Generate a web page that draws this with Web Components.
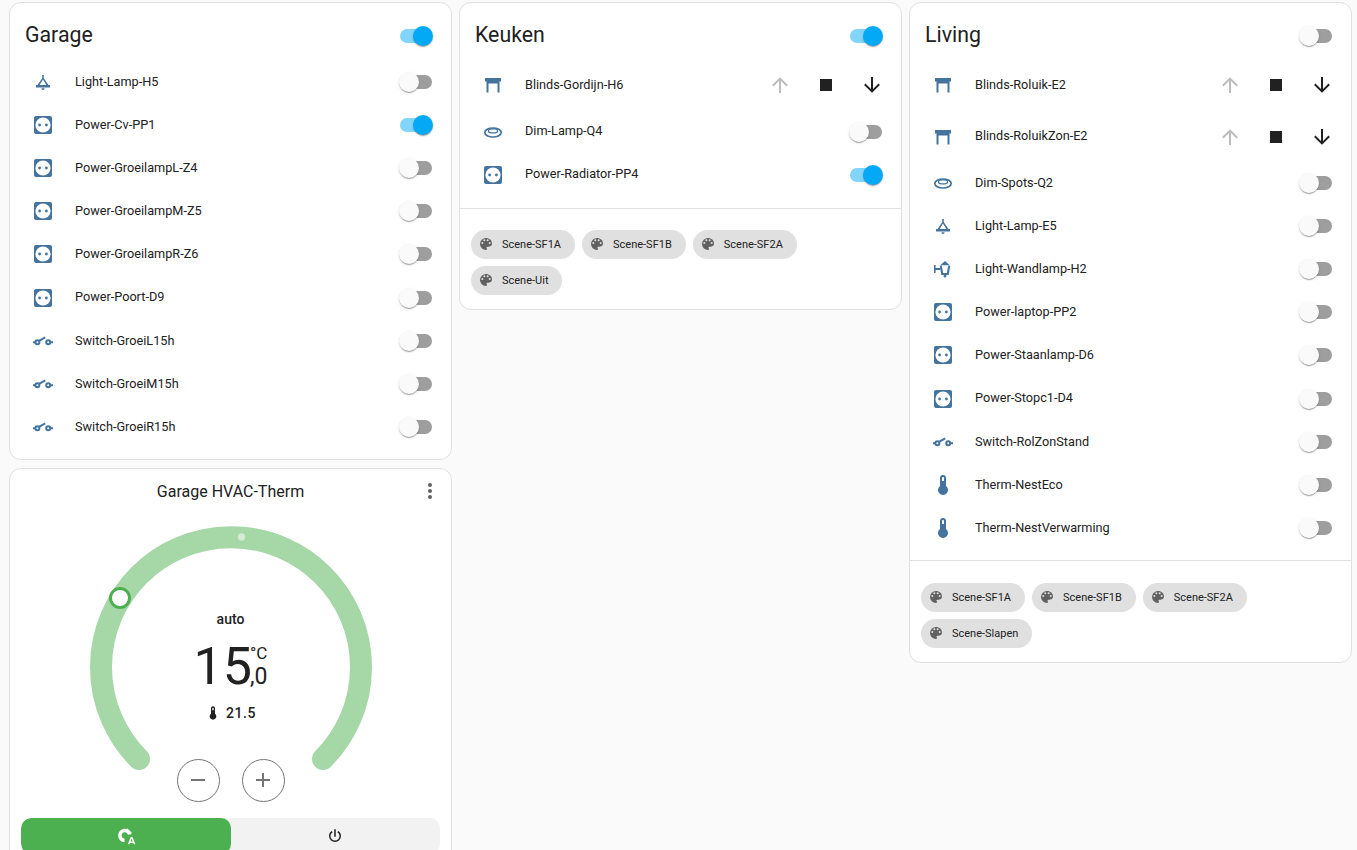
<!DOCTYPE html>
<html>
<head>
<meta charset="utf-8">
<title>Dashboard</title>
<style>
    html { overflow: hidden; }
    body {
        margin: 0;
        padding: 2px 5px 0 9px;
        background: #fafafa;
        color: #212121;
        font-family: Roboto, "Liberation Sans", sans-serif;
    }
    .columns {
        display: grid;
        grid-template-columns: repeat(3, 443px);
        gap: 7px;
        align-items: start;
    }
    .stack {
        display: flex;
        flex-direction: column;
        gap: 7.5px;
    }
</style>
</head>
<body>
<div class="columns">
    <div class="stack">
        <entities-card name="Garage" on="on">
            <entity-row icon="ceiling" name="Light-Lamp-H5"></entity-row>
            <entity-row icon="socket" name="Power-Cv-PP1" on="on"></entity-row>
            <entity-row icon="socket" name="Power-GroeilampL-Z4"></entity-row>
            <entity-row icon="socket" name="Power-GroeilampM-Z5"></entity-row>
            <entity-row icon="socket" name="Power-GroeilampR-Z6"></entity-row>
            <entity-row icon="socket" name="Power-Poort-D9"></entity-row>
            <entity-row icon="switch" name="Switch-GroeiL15h"></entity-row>
            <entity-row icon="switch" name="Switch-GroeiM15h"></entity-row>
            <entity-row icon="switch" name="Switch-GroeiR15h"></entity-row>
        </entities-card>
        <climate-card name="Garage HVAC-Therm"></climate-card>
    </div>
    <entities-card name="Keuken" on="on" style="--rows-pad: 11.5px">
        <cover-row name="Blinds-Gordijn-H6"></cover-row>
        <entity-row icon="dim" name="Dim-Lamp-Q4"></entity-row>
        <entity-row icon="socket" name="Power-Radiator-PP4" on="on"></entity-row>
        <scene-chip slot="chips" name="Scene-SF1A"></scene-chip>
        <scene-chip slot="chips" name="Scene-SF1B"></scene-chip>
        <scene-chip slot="chips" name="Scene-SF2A"></scene-chip>
        <scene-chip slot="chips" name="Scene-Uit"></scene-chip>
    </entities-card>
    <entities-card name="Living">
        <cover-row name="Blinds-Roluik-E2"></cover-row>
        <cover-row name="Blinds-RoluikZon-E2" style="margin-top: 2px"></cover-row>
        <entity-row icon="dim" name="Dim-Spots-Q2"></entity-row>
        <entity-row icon="ceiling" name="Light-Lamp-E5"></entity-row>
        <entity-row icon="wall" name="Light-Wandlamp-H2"></entity-row>
        <entity-row icon="socket" name="Power-laptop-PP2"></entity-row>
        <entity-row icon="socket" name="Power-Staanlamp-D6"></entity-row>
        <entity-row icon="socket" name="Power-Stopc1-D4"></entity-row>
        <entity-row icon="switch" name="Switch-RolZonStand"></entity-row>
        <entity-row icon="therm" name="Therm-NestEco"></entity-row>
        <entity-row icon="therm" name="Therm-NestVerwarming"></entity-row>
        <scene-chip slot="chips" name="Scene-SF1A"></scene-chip>
        <scene-chip slot="chips" name="Scene-SF1B"></scene-chip>
        <scene-chip slot="chips" name="Scene-SF2A"></scene-chip>
        <scene-chip slot="chips" name="Scene-Slapen"></scene-chip>
    </entities-card>
</div>

<script>
const ICONS = {
    ceiling: `<path fill-rule="evenodd" d="M11.200 5h1.600v3.200L17.500 15H19v2.600H5V15h1.500l4.700-6.800z M12 9.600L8.600 15h6.800z"/><path d="M10.400 18.300h3.200a1.600 1.600 0 0 1-3.200 0z"/>`,
    socket: `<rect x="3" y="3" width="18" height="18" rx="2"/><circle cx="12" cy="12" r="7.6" fill="#fff"/><circle cx="8.600" cy="12" r="1.400"/><circle cx="15.400" cy="12" r="1.400"/>`,
    switch: `<g fill="none" stroke="currentColor" stroke-width="2"><path d="M2 13.200h2.400"/><circle cx="6.400" cy="13.200" r="2"/><path d="M8 11.900l6.200-3.600"/><circle cx="17.200" cy="13.200" r="2"/><path d="M19.200 13.200H22"/></g>`,
    blinds: `<path d="M4 5h16v3.500h-1.500v11h-2v-9h-9v9h-2v-11H4z"/>`,
    dim: `<g fill="none" stroke="currentColor"><ellipse cx="12" cy="12.500" rx="8.200" ry="4.500" stroke-width="1.700"/><ellipse cx="12" cy="10.900" rx="4.600" ry="2" stroke-width="1.200"/></g>`,
    wall: `<path d="M3 8h1.600v8H3z M4.600 11.100H9.500v1.800H4.600z"/><path d="M14 4L18.800 8.200H9.200z"/><path d="M9.800 8.600l1.400 8.400h5.600l1.400-8.400" fill="none" stroke="currentColor" stroke-width="2.100"/><circle cx="14" cy="19" r="1.500"/>`,
    therm: `<path d="M15 13V5A3 3 0 0 0 9 5V13A5 5 0 1 0 15 13M12 4A1 1 0 0 1 13 5V8H11V5A1 1 0 0 1 12 4Z"/>`,
    palette: `<path d="M17.5,12A1.5,1.5 0 0,1 16,10.5A1.5,1.5 0 0,1 17.5,9A1.5,1.5 0 0,1 19,10.5A1.5,1.5 0 0,1 17.5,12M14.5,8A1.5,1.5 0 0,1 13,6.5A1.5,1.5 0 0,1 14.5,5A1.5,1.5 0 0,1 16,6.5A1.5,1.5 0 0,1 14.5,8M9.5,8A1.5,1.5 0 0,1 8,6.5A1.5,1.5 0 0,1 9.5,5A1.5,1.5 0 0,1 11,6.5A1.5,1.5 0 0,1 9.5,8M6.5,12A1.5,1.5 0 0,1 5,10.5A1.5,1.5 0 0,1 6.5,9A1.5,1.5 0 0,1 8,10.5A1.5,1.5 0 0,1 6.5,12M12,3A9,9 0 0,0 3,12A9,9 0 0,0 12,21A1.5,1.5 0 0,0 13.5,19.5C13.5,19.11 13.35,18.76 13.11,18.5C12.88,18.23 12.73,17.88 12.73,17.5A1.5,1.5 0 0,1 14.23,16H16A5,5 0 0,0 21,11C21,6.58 16.97,3 12,3Z"/>`,
    up: `<path d="M13,20H11V8L5.5,13.5L4.08,12.08L12,4.16L19.92,12.08L18.5,13.5L13,8V20Z"/>`,
    down: `<path d="M11,4H13V16L18.5,10.5L19.92,11.92L12,19.84L4.08,11.92L5.5,10.5L11,16V4Z"/>`,
    stop: `<path d="M18,18H6V6H18V18Z"/>`,
    dots: `<path d="M12,16A2,2 0 0,1 14,18A2,2 0 0,1 12,20A2,2 0 0,1 10,18A2,2 0 0,1 12,16M12,10A2,2 0 0,1 14,12A2,2 0 0,1 12,14A2,2 0 0,1 10,12A2,2 0 0,1 12,10M12,4A2,2 0 0,1 14,6A2,2 0 0,1 12,8A2,2 0 0,1 10,6A2,2 0 0,1 12,4Z"/>`,
    minus: `<path d="M19,13H5V11H19V13Z"/>`,
    plus: `<path d="M19,13H13V19H11V13H5V11H11V5H13V11H19V13Z"/>`,
    power: `<path d="M16.56,5.44L15.11,6.89C16.84,7.94 18,9.83 18,12A6,6 0 0,1 12,18A6,6 0 0,1 6,12C6,9.83 7.16,7.94 8.88,6.88L7.44,5.44C5.36,6.88 4,9.28 4,12A8,8 0 0,0 12,20A8,8 0 0,0 20,12C20,9.28 18.64,6.88 16.56,5.44M13,3H11V13H13"/>`,
    auto: `<path d="M15.800 10.500A5 5 0 1 0 10.500 16.500" fill="none" stroke="currentColor" stroke-width="3.600"/><path d="M13 4.200L18 9l-4.500 .5z"/><path d="M14.600 20.300l2.600-6.600h.8l2.600 6.600M15.600 18.300h4" fill="none" stroke="currentColor" stroke-width="1.500"/>`
};

class MdiIcon extends HTMLElement {
    constructor() {
        super();
        this.attachShadow({ mode: 'open' });
    }

    connectedCallback() {
        const size = this.getAttribute('size') || '24';
        this.shadowRoot.innerHTML = `
            <style>
                :host { display: inline-flex; flex: none; width: ${size}px; height: ${size}px; }
                svg { display: block; width: 100%; height: 100%; fill: currentColor; }
            </style>
            <svg viewBox="0 0 24 24">${ICONS[this.getAttribute('name')] || ''}</svg>
        `;
    }
}

class HaToggle extends HTMLElement {
    constructor() {
        super();
        this.attachShadow({ mode: 'open' });
    }

    connectedCallback() {
        const on = this.getAttribute('on') === 'on';
        this.shadowRoot.innerHTML = `
            <style>
                :host { display: block; flex: none; width: 32px; height: 20px; position: relative; }
                .track {
                    position: absolute;
                    left: 0;
                    top: 3px;
                    width: 32px;
                    height: 14px;
                    border-radius: 7px;
                    background: ${on ? '#81d4fa' : '#9e9e9e'};
                }
                .thumb {
                    position: absolute;
                    left: ${on ? '13px' : '-1px'};
                    top: 0;
                    width: 20px;
                    height: 20px;
                    border-radius: 50%;
                    background: ${on ? '#03a9f4' : '#fafafa'};
                    box-shadow: 0 2px 1px -1px rgba(0,0,0,.2), 0 1px 1px rgba(0,0,0,.14), 0 1px 3px rgba(0,0,0,.12);
                }
            </style>
            <div class="track"></div>
            <div class="thumb"></div>
        `;
    }
}

class EntitiesCard extends HTMLElement {
    constructor() {
        super();
        this.attachShadow({ mode: 'open' });
    }

    connectedCallback() {
        const hasChips = this.querySelector('[slot="chips"]') !== null;
        this.shadowRoot.innerHTML = `
            <style>
                :host {
                    display: block;
                    background: #fff;
                    border: 1px solid #e0e0e0;
                    border-radius: 12px;
                    box-sizing: border-box;
                    overflow: hidden;
                }
                .header {
                    display: flex;
                    align-items: center;
                    justify-content: space-between;
                    height: 57.5px;
                    padding: 8.5px 19px 0 15px;
                    box-sizing: border-box;
                    font-size: 21.3px;
                    line-height: 30px;
                }
                .header span { margin-bottom: 2px; }
                .rows { padding-bottom: var(--rows-pad, 11px); }
                .chips {
                    display: flex;
                    flex-wrap: wrap;
                    gap: 7px;
                    padding: 21.1px 11px 14px;
                    border-top: 1px solid #e0e0e0;
                }
            </style>
            <div class="header">
                <span>${this.getAttribute('name')}</span>
                <ha-toggle on="${this.getAttribute('on') || ''}"></ha-toggle>
            </div>
            <div class="rows"><slot></slot></div>
            ${hasChips ? '<div class="chips"><slot name="chips"></slot></div>' : ''}
        `;
    }
}

class EntityRow extends HTMLElement {
    constructor() {
        super();
        this.attachShadow({ mode: 'open' });
    }

    connectedCallback() {
        this.shadowRoot.innerHTML = `
            <style>
                :host {
                    display: flex;
                    align-items: center;
                    height: 43.12px;
                    padding: 0 19px 0 21px;
                    font-size: 12.7px;
                }
                mdi-icon { color: #44739e; margin-right: 20px; }
                .name { flex: 1; padding-bottom: 1.4px; }
            </style>
            <mdi-icon name="${this.getAttribute('icon')}"></mdi-icon>
            <span class="name">${this.getAttribute('name')}</span>
            <ha-toggle on="${this.getAttribute('on') || ''}"></ha-toggle>
        `;
    }
}

class CoverRow extends HTMLElement {
    constructor() {
        super();
        this.attachShadow({ mode: 'open' });
    }

    connectedCallback() {
        this.shadowRoot.innerHTML = `
            <style>
                :host {
                    display: flex;
                    align-items: center;
                    height: 49.5px;
                    padding: 0 6px 0.5px 21px;
                    box-sizing: border-box;
                    font-size: 12.7px;
                }
                .icon { color: #44739e; margin-right: 20px; }
                .name { flex: 1; padding-bottom: 2px; }
                .btn { width: 46px; display: flex; justify-content: center; color: #212121; }
                .off { color: #bdbdbd; }
            </style>
            <mdi-icon class="icon" name="blinds"></mdi-icon>
            <span class="name">${this.getAttribute('name')}</span>
            <div class="btn off"><mdi-icon name="up"></mdi-icon></div>
            <div class="btn"><mdi-icon name="stop"></mdi-icon></div>
            <div class="btn"><mdi-icon name="down"></mdi-icon></div>
        `;
    }
}

class SceneChip extends HTMLElement {
    constructor() {
        super();
        this.attachShadow({ mode: 'open' });
    }

    connectedCallback() {
        this.shadowRoot.innerHTML = `
            <style>
                :host {
                    display: inline-flex;
                    align-items: center;
                    height: 29px;
                    padding: 0 14px 0 7px;
                    border-radius: 15px;
                    background: #e0e0e0;
                    font-size: 11px;
                    color: #212121;
                }
                mdi-icon { color: #616161; margin-right: 8px; }
            </style>
            <mdi-icon name="palette" size="16"></mdi-icon>
            <span>${this.getAttribute('name')}</span>
        `;
    }
}

class ClimateCard extends HTMLElement {
    constructor() {
        super();
        this.attachShadow({ mode: 'open' });
    }

    connectedCallback() {
        // 270 graden boog, straal 130 rond (150,152)
        this.shadowRoot.innerHTML = `
            <style>
                :host {
                    display: block;
                    background: #fff;
                    border: 1px solid #e0e0e0;
                    border-radius: 12px;
                    box-sizing: border-box;
                    height: 400px;
                }
                .title {
                    display: grid;
                    grid-template-columns: 1fr auto 1fr;
                    align-items: center;
                    height: 46px;
                    padding-bottom: 1px;
                    box-sizing: border-box;
                    font-size: 16px;
                }
                .title mdi-icon { grid-column: 3; justify-self: end; margin-right: 9px; color: #616161; }
                .title span { grid-column: 2; }
                .dial { display: grid; justify-items: center; height: 244px; }
                .dial > * { grid-area: 1 / 1; }
                svg { display: block; width: 300px; height: 244px; overflow: visible; }
                .info {
                    display: flex;
                    flex-direction: column;
                    align-items: center;
                    padding-top: 94px;
                }
                .mode { font-size: 14px; font-weight: 500; line-height: 20px; }
                .value { display: flex; margin: 12px 0 10px; height: 52px; }
                .whole { font-size: 52px; line-height: 52px; font-weight: 400; }
                .side { display: flex; flex-direction: column; justify-content: flex-end; margin-left: -2px; padding-bottom: 3px; }
                .unit { font-size: 17px; line-height: 16px; margin-bottom: 3px; }
                .dec { font-size: 23px; line-height: 26px; }
                .current {
                    display: flex;
                    align-items: center;
                    gap: 5px;
                    font-size: 14px;
                    font-weight: 500;
                    letter-spacing: .5px;
                    line-height: 20px;
                }
                .buttons { display: flex; justify-content: center; gap: 22px; }
                .round {
                    width: 43px;
                    height: 43px;
                    box-sizing: border-box;
                    border: 1px solid #757575;
                    border-radius: 50%;
                    display: flex;
                    align-items: center;
                    justify-content: center;
                    color: #757575;
                }
                .modes {
                    display: flex;
                    margin: 16px 11px 0;
                    height: 36px;
                    border-radius: 10px;
                    background: #f2f2f2;
                    overflow: hidden;
                }
                .modes div { flex: 1; display: flex; align-items: center; justify-content: center; color: #212121; }
                .modes .active { background: #4caf50; color: #fff; border-radius: 10px; }
            </style>
            <div class="title">
                <span>${this.getAttribute('name')}</span>
                <mdi-icon name="dots"></mdi-icon>
            </div>
            <div class="dial">
                <svg viewBox="0 0 300 244">
                    <path d="M58 244 A130 130 0 1 1 242 244" fill="none" stroke="#a5d7a7" stroke-width="22" stroke-linecap="round"/>
                    <circle cx="160.500" cy="22" r="3.700" fill="#d2ebd3"/>
                    <circle cx="39" cy="83" r="9.500" fill="#fff" stroke="#4caf50" stroke-width="3"/>
                </svg>
                <div class="info">
                    <div class="mode">auto</div>
                    <div class="value">
                        <span class="whole">15</span>
                        <div class="side"><span class="unit">°C</span><span class="dec">,0</span></div>
                    </div>
                    <div class="current"><mdi-icon name="therm" size="16"></mdi-icon><span>21.5</span></div>
                </div>
            </div>
            <div class="buttons">
                <div class="round"><mdi-icon name="minus"></mdi-icon></div>
                <div class="round"><mdi-icon name="plus"></mdi-icon></div>
            </div>
            <div class="modes">
                <div class="active"><mdi-icon name="auto" size="24"></mdi-icon></div>
                <div><mdi-icon name="power" size="18"></mdi-icon></div>
            </div>
        `;
    }
}

customElements.define('mdi-icon', MdiIcon);
customElements.define('ha-toggle', HaToggle);
customElements.define('entities-card', EntitiesCard);
customElements.define('entity-row', EntityRow);
customElements.define('cover-row', CoverRow);
customElements.define('scene-chip', SceneChip);
customElements.define('climate-card', ClimateCard);
</script>
</body>
</html>
